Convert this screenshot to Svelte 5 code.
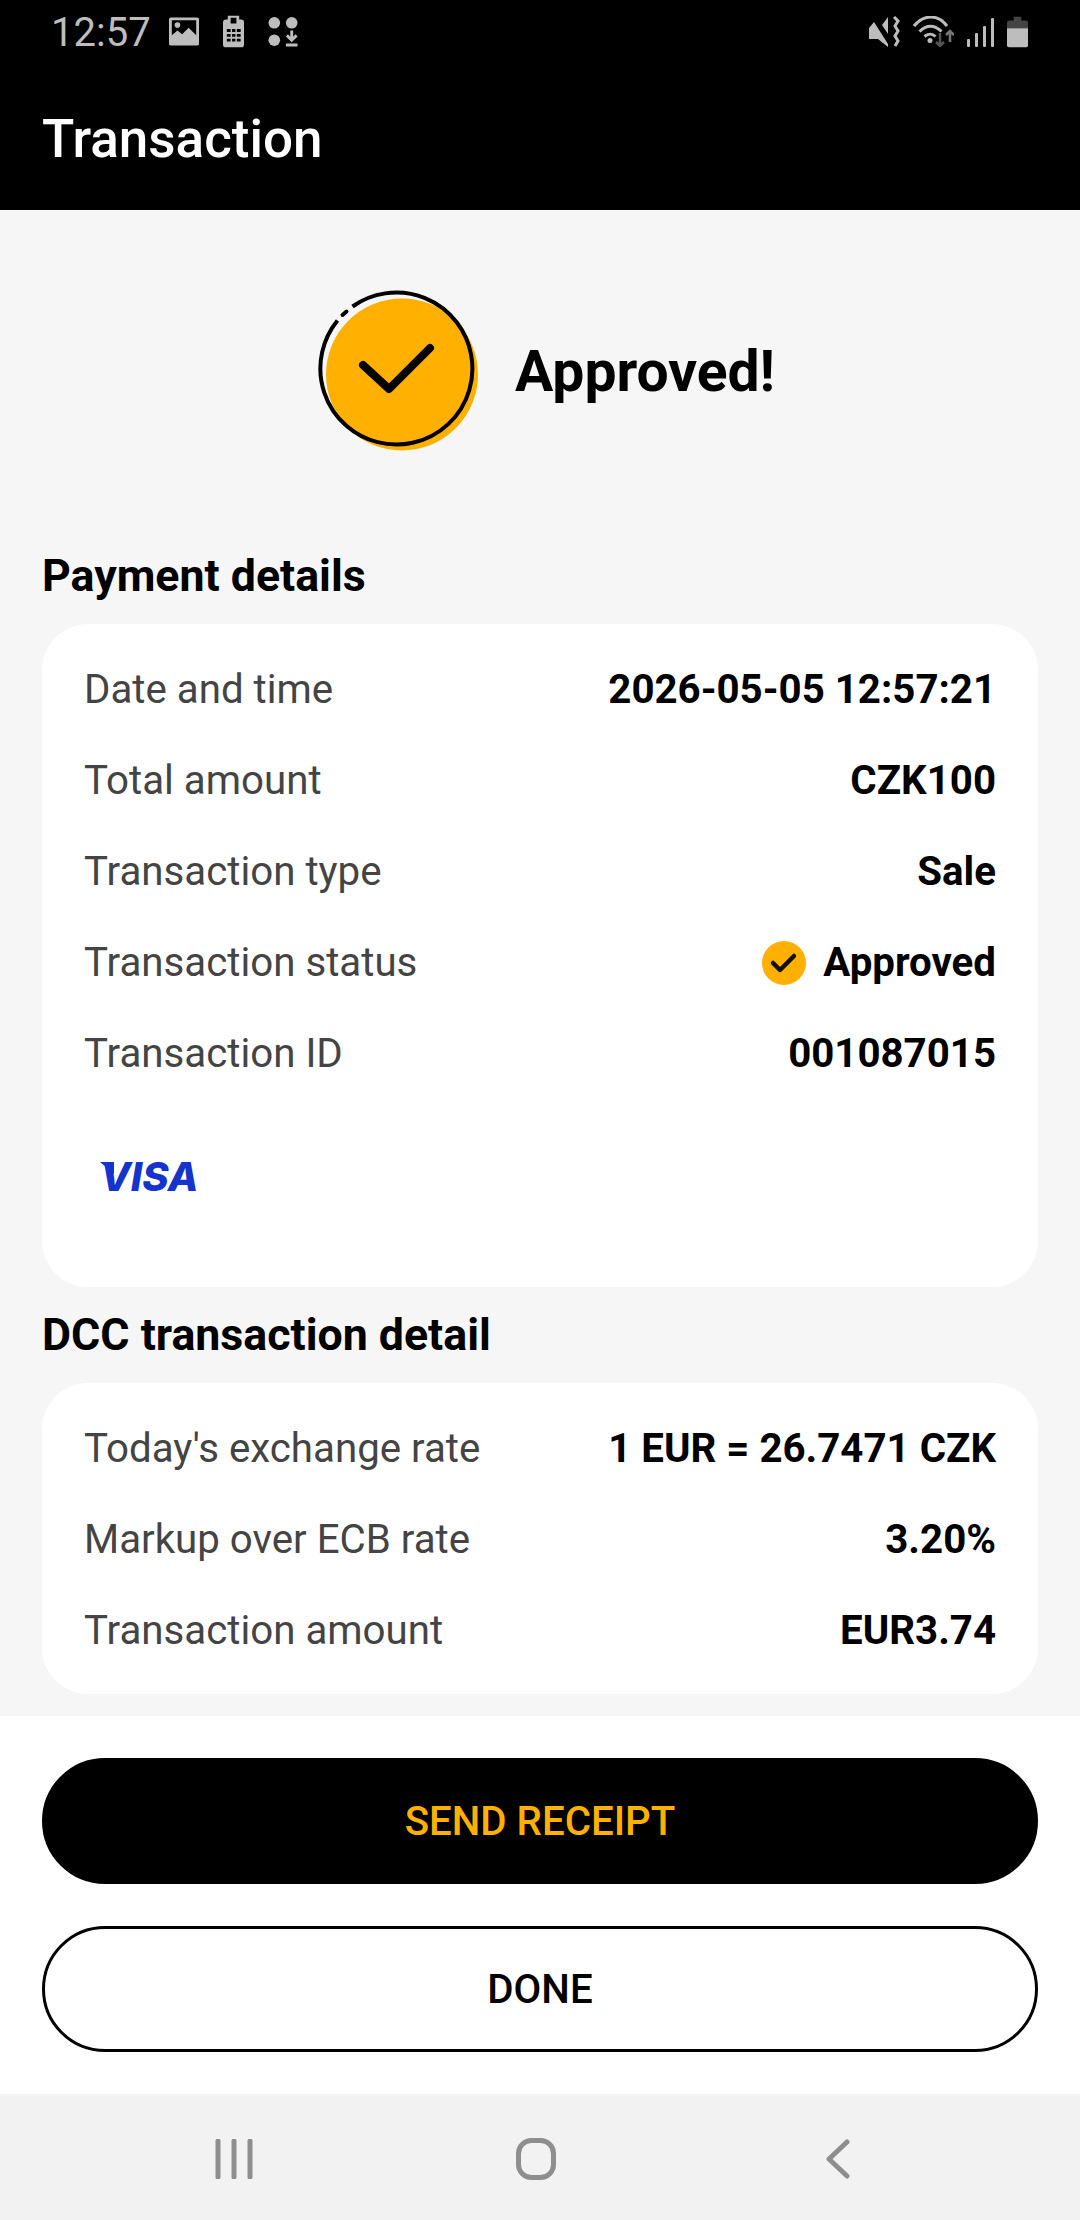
<script lang="ts">
  type Row = { label: string; value: string; approved?: boolean };

  const paymentRows: Row[] = [
    { label: 'Date and time', value: '2026-05-05 12:57:21' },
    { label: 'Total amount', value: 'CZK100' },
    { label: 'Transaction type', value: 'Sale' },
    { label: 'Transaction status', value: 'Approved', approved: true },
    { label: 'Transaction ID', value: '001087015' },
  ];

  const dccRows: Row[] = [
    { label: "Today's exchange rate", value: '1 EUR = 26.7471 CZK' },
    { label: 'Markup over ECB rate', value: '3.20%' },
    { label: 'Transaction amount', value: 'EUR3.74' },
  ];
</script>

<div class="screen">
  <header class="top">
    <div class="status">
      <div class="status-left">
        <span class="clock">12:57</span>
        <svg width="30" height="29" viewBox="0 0 32 30">
          <path fill="#bdbdbd" fill-rule="evenodd" d="M2 0h28a2 2 0 0 1 2 2v26a2 2 0 0 1-2 2H2a2 2 0 0 1-2-2V2a2 2 0 0 1 2-2zM3 3v16l6-5 5 4 7-7 8 8V3z" />
          <circle cx="9" cy="8" r="3" fill="#bdbdbd" />
        </svg>
        <svg width="21" height="33" viewBox="0 0 22 33">
          <path fill="#bdbdbd" fill-rule="evenodd" d="M5 0h12v4h2a3 3 0 0 1 3 3v23a3 3 0 0 1-3 3H3a3 3 0 0 1-3-3V7a3 3 0 0 1 3-3h2zM8 2v6h6V2zM4 14v3h4v-3zM9.500 14v3h3.500v-3zM14.500 14v3h4v-3zM4 19v3h4v-3zM9.500 19v3h3.500v-3zM14.500 19v3h4v-3zM4 24v3h4v-3zM9.500 24v3h3.500v-3zM14.500 24v3h4v-3z" />
        </svg>
        <svg width="30" height="30" viewBox="0 0 30 31">
          <circle cx="6" cy="6" r="6" fill="#bdbdbd" />
          <circle cx="24" cy="6" r="6" fill="#bdbdbd" />
          <circle cx="6" cy="24" r="6" fill="#bdbdbd" />
          <path d="M24 14v9M19 19l5 5 5-5M18 29h12" stroke="#bdbdbd" stroke-width="3" fill="none" />
        </svg>
      </div>
      <div class="status-right">
        <svg width="31" height="31" viewBox="0 0 31 31">
          <path fill="#bdbdbd" d="M0 12L5 6 19 28v3L9 23H0zM13 9l6-8v17z" />
          <path d="M25 1l4 4-3 5 3 5-3 5 3 5-3 5" stroke="#bdbdbd" stroke-width="3" fill="none" />
        </svg>
        <svg width="41" height="31" viewBox="0 0 41 31">
          <path d="M1 10c10-12 24-12 33 0M6.500 15.500c7-7 15-7 22 0M11.500 20.500c3.500-3 8-3 11 0" stroke="#bdbdbd" stroke-width="3" fill="none" />
          <circle cx="17" cy="24.500" r="2.500" fill="#bdbdbd" />
          <path d="M27 17v13M23 26l4 4 4-4" stroke="#555" stroke-width="2.500" fill="none" />
          <path d="M37 26V15M33 19l4-4 4 4" stroke="#777" stroke-width="2.500" fill="none" />
        </svg>
        <svg width="27" height="30" viewBox="0 0 27 30">
          <rect x="0" y="22" width="3" height="8" rx="1" fill="#bdbdbd" />
          <rect x="8" y="16" width="3" height="14" rx="1" fill="#bdbdbd" />
          <rect x="16" y="9" width="3" height="21" rx="1" fill="#bdbdbd" />
          <rect x="24" y="1" width="3" height="29" rx="1" fill="#bdbdbd" />
        </svg>
        <svg width="21" height="32" viewBox="0 0 22 32">
          <path fill="#444" d="M7 0h8v4h5a2 2 0 0 1 2 2v6H0V6a2 2 0 0 1 2-2h5z" />
          <path fill="#bdbdbd" d="M0 12h22v18a2 2 0 0 1-2 2H2a2 2 0 0 1-2-2z" />
        </svg>
      </div>
    </div>
    <h1>Transaction</h1>
  </header>

  <main class="content">
    <div class="result">
      <svg width="166" height="166" viewBox="0 0 166 166">
        <circle cx="85" cy="84.500" r="76" fill="#ffb000" />
        <path d="M35.500 16.500A76 76 0 1 1 20.500 30.500" fill="none" stroke="#000" stroke-width="4" />
        <path d="M25.500 25l4-3.500" stroke="#000" stroke-width="4" stroke-linecap="round" />
        <path d="M46 75l26 24 41-41" fill="none" stroke="#000" stroke-width="8" stroke-linecap="round" stroke-linejoin="round" />
      </svg>
      <span class="result-text">Approved!</span>
    </div>

    <h2>Payment details</h2>
    <section class="card">
      {#each paymentRows as row (row.label)}
        <div class="row">
          <span class="label">{row.label}</span>
          <span class="value">
            {#if row.approved}
              <svg width="44" height="44" viewBox="0 0 44 44">
                <circle cx="22" cy="22" r="22" fill="#ffb000" />
                <path d="M11 22l7 7 14-14" fill="none" stroke="#111" stroke-width="4.500" stroke-linecap="round" stroke-linejoin="round" />
              </svg>
            {/if}
            {row.value}
          </span>
        </div>
      {/each}
      <div class="brand">VISA</div>
    </section>

    <h2>DCC transaction detail</h2>
    <section class="card">
      {#each dccRows as row (row.label)}
        <div class="row">
          <span class="label">{row.label}</span>
          <span class="value">{row.value}</span>
        </div>
      {/each}
    </section>
  </main>

  <div class="actions">
    <button class="btn primary">SEND RECEIPT</button>
    <button class="btn">DONE</button>
  </div>

  <nav class="navbar">
    <svg width="38" height="40" viewBox="0 0 38 40">
      <path d="M3 2v36M19 2v36M35 2v36" stroke="#8e8e8e" stroke-width="5" stroke-linecap="round" />
    </svg>
    <svg width="40" height="42" viewBox="0 0 40 42">
      <rect x="2.500" y="2.500" width="35" height="37" rx="13" fill="none" stroke="#8e8e8e" stroke-width="5" />
    </svg>
    <svg width="24" height="40" viewBox="0 0 24 40">
      <path d="M21 3L3 20l18 17" fill="none" stroke="#8e8e8e" stroke-width="5" stroke-linecap="round" stroke-linejoin="round" />
    </svg>
  </nav>
</div>

<style>
  :global(body) {
    margin: 0;
    background: #f6f6f6;
  }
  .screen {
    width: 1080px;
    height: 2220px;
    display: flex;
    flex-direction: column;
    font-family: Roboto, 'Liberation Sans', sans-serif;
    background: #f6f6f6;
    color: #000;
    overflow: hidden;
  }
  .top {
    height: 210px;
    background: #000;
    color: #fff;
    flex: none;
  }
  .status {
    height: 63px;
    padding: 0 52px;
    display: flex;
    align-items: center;
    justify-content: space-between;
    color: #bdbdbd;
  }
  .status-left,
  .status-right {
    display: flex;
    align-items: center;
  }
  .status-left {
    gap: 24px;
  }
  .status-right {
    gap: 13px;
  }
  .clock {
    font-size: 40px;
    line-height: 46px;
    margin: 3px -6px 0 -1px;
  }
  h1 {
    margin: 0;
    padding: 50px 42px 0;
    font-size: 53px;
    line-height: 53px;
    font-weight: 500;
  }
  .content {
    flex: 1;
    padding: 0 42px;
    min-height: 0;
  }
  .result {
    display: flex;
    align-items: center;
    justify-content: center;
    gap: 32px;
    height: 166px;
    padding: 80px 0 72px 12px;
  }
  .result-text {
    margin-bottom: 3px;
    font-size: 57px;
    font-weight: 700;
  }
  h2 {
    margin: 0;
    font-size: 44.7px;
    line-height: 96px;
    height: 96px;
    font-weight: 700;
  }
  .card {
    background: #fff;
    border-radius: 46px;
    padding: 20px 42px 18px;
  }
  .row {
    display: flex;
    align-items: center;
    justify-content: space-between;
    height: 91px;
  }
  .label {
    font-size: 40.25px;
    color: #444;
  }
  .value {
    display: flex;
    align-items: center;
    gap: 17px;
    font-size: 40.25px;
    font-weight: 700;
  }
  .brand {
    position: relative;
    margin-top: 48px;
    padding-left: 16px;
    height: 122px;
    font-family: Inter, Roboto, sans-serif;
    font-size: 40px;
    line-height: 60px;
    font-weight: 800;
    font-style: italic;
    color: #1434cb;
  }
  .brand::before {
    content: '';
    position: absolute;
    left: 16px;
    top: 15px;
    width: 14px;
    height: 12px;
    background: #1434cb;
    clip-path: polygon(0 0, 100% 0, 100% 100%);
  }
  .actions {
    flex: none;
    height: 378px;
    box-sizing: border-box;
    padding: 42px;
    background: #fff;
    display: flex;
    flex-direction: column;
    gap: 42px;
  }
  .btn {
    height: 126px;
    border-radius: 63px;
    border: 3px solid #000;
    background: #fff;
    color: #000;
    font-family: inherit;
    font-size: 40.25px;
    font-weight: 500;
  }
  .primary {
    background: #000;
    color: #ffb000;
  }
  .navbar {
    flex: none;
    height: 126px;
    box-sizing: border-box;
    padding: 4px 8px 0 0;
    background: #f2f2f2;
    display: grid;
    grid-template-columns: repeat(3, 302px);
    justify-content: center;
    justify-items: center;
    align-items: center;
  }
</style>
